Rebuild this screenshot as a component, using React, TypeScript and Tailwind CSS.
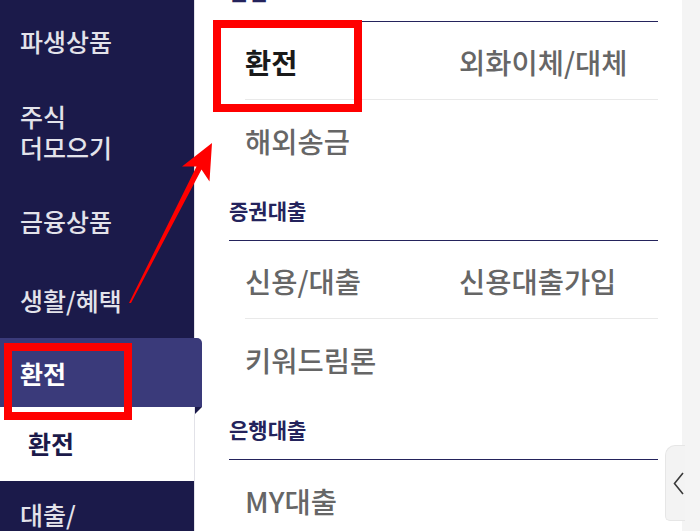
import React from "react";

const font = { fontFamily: '"Noto Sans CJK KR", "Noto Sans", sans-serif' };

function SideItem({ h, children, className = "" }: { h: string; children: React.ReactNode; className?: string }) {
  return (
    <div className={`shrink-0 flex items-center pl-[20px] text-[25px] leading-[31px] text-[#e3e3ea] font-medium ${h} ${className}`}>
      <div>{children}</div>
    </div>
  );
}

function Row({ left, right, last = false, bold = false }: { left: string; right?: string; last?: boolean; bold?: boolean }) {
  return (
    <div className={`ml-[16px] h-[78px] grid grid-cols-[214px_1fr] items-center pt-[3px] ${last ? "" : "border-b border-[#e9e9e9]"}`}>
      <div className={`text-[28.5px] leading-[34px] whitespace-nowrap ${bold ? "font-bold text-[#1a1a1a]" : "font-medium text-[#666666]"}`}>{left}</div>
      {right ? <div className="text-[28.5px] leading-[34px] whitespace-nowrap font-medium text-[#666666]">{right}</div> : <div />}
    </div>
  );
}

function Heading({ children }: { children: React.ReactNode }) {
  return (
    <div className="pt-[20px] pb-[18px] border-b border-[#24235c] text-[21px] leading-[24px] font-bold text-[#24235c]">
      {children}
    </div>
  );
}

export default function App() {
  return (
    <div className="relative w-[700px] h-[531px] overflow-hidden flex items-start bg-white" style={font}>
      {/* Sidebar */}
      <div className="relative z-10 w-[194px] h-[531px] shrink-0 bg-[#1b1a4a] flex flex-col">
        <SideItem h="h-[83px]">파생상품</SideItem>
        <SideItem h="h-[97px]">
          주식
          <br />
          더모으기
        </SideItem>
        <SideItem h="h-[82px]">금융상품</SideItem>
        <SideItem h="h-[76px]">생활/혜택</SideItem>
        <div className="relative shrink-0 w-[202px] h-[69px] bg-[#3a3a7a] rounded-tr-[5px] flex items-center pl-[20px] pt-[2px] text-[25px] font-bold text-white">
          환전
          <div className="absolute right-0 bottom-[-7px] w-0 h-0 border-t-[7px] border-t-[#1b1a4a] border-r-[7px] border-r-transparent" />
        </div>
        <div className="shrink-0 h-[74px] bg-white flex items-center pl-[28px] text-[25px] font-bold text-[#1b1a4a]">환전</div>
        <div className="shrink-0 pl-[20px] pt-[18px] text-[25px] leading-[31px] text-[#e3e3ea] font-medium">
          대출/
        </div>
      </div>

      {/* Main */}
      <div className="flex-1 self-stretch bg-white border-l border-[#e2e2e8] pl-[34px] pr-[24px] mt-[-41px]">
        <Heading>환전</Heading>
        <Row left="환전" right="외화이체/대체" bold />
        <Row left="해외송금" last />
        <Heading>증권대출</Heading>
        <Row left="신용/대출" right="신용대출가입" />
        <Row left="키워드림론" last />
        <Heading>은행대출</Heading>
        <Row left="MY대출" last />
      </div>

      {/* Right strip */}
      <div className="w-[18px] h-[531px] shrink-0 bg-[#f4f4f4]" />

      {/* Handle tab */}
      <div className="absolute left-[665px] top-[445px] w-[20px] h-[76px] bg-[#f3f3f3] border border-[#e6e6e6] border-r-0 rounded-tl-[10px] rounded-bl-[5px] flex items-center pl-[7px]">
        <svg width="11" height="23" viewBox="0 0 11 23" fill="none">
          <polyline points="10,1 1.5,11.5 10,22" stroke="#3a3a3a" strokeWidth="1.6" strokeLinejoin="miter" />
        </svg>
      </div>

      {/* Red annotations */}
      <div className="absolute left-[213px] top-[20px] w-[149px] h-[92px] border-[8px] border-[#ff0000] z-20" />
      <div className="absolute left-[4px] top-[343px] w-[128px] h-[77px] border-[8px] border-[#ff0000] z-20" />
      <svg className="absolute left-0 top-0 z-20 pointer-events-none" width="700" height="531" viewBox="0 0 700 531">
        <polygon
          points="129,303 131,303 201.5,169.5 209.5,181.5 212,143 182,166.5 196.5,166.5"
          fill="#ff0000"
        />
      </svg>
    </div>
  );
}
